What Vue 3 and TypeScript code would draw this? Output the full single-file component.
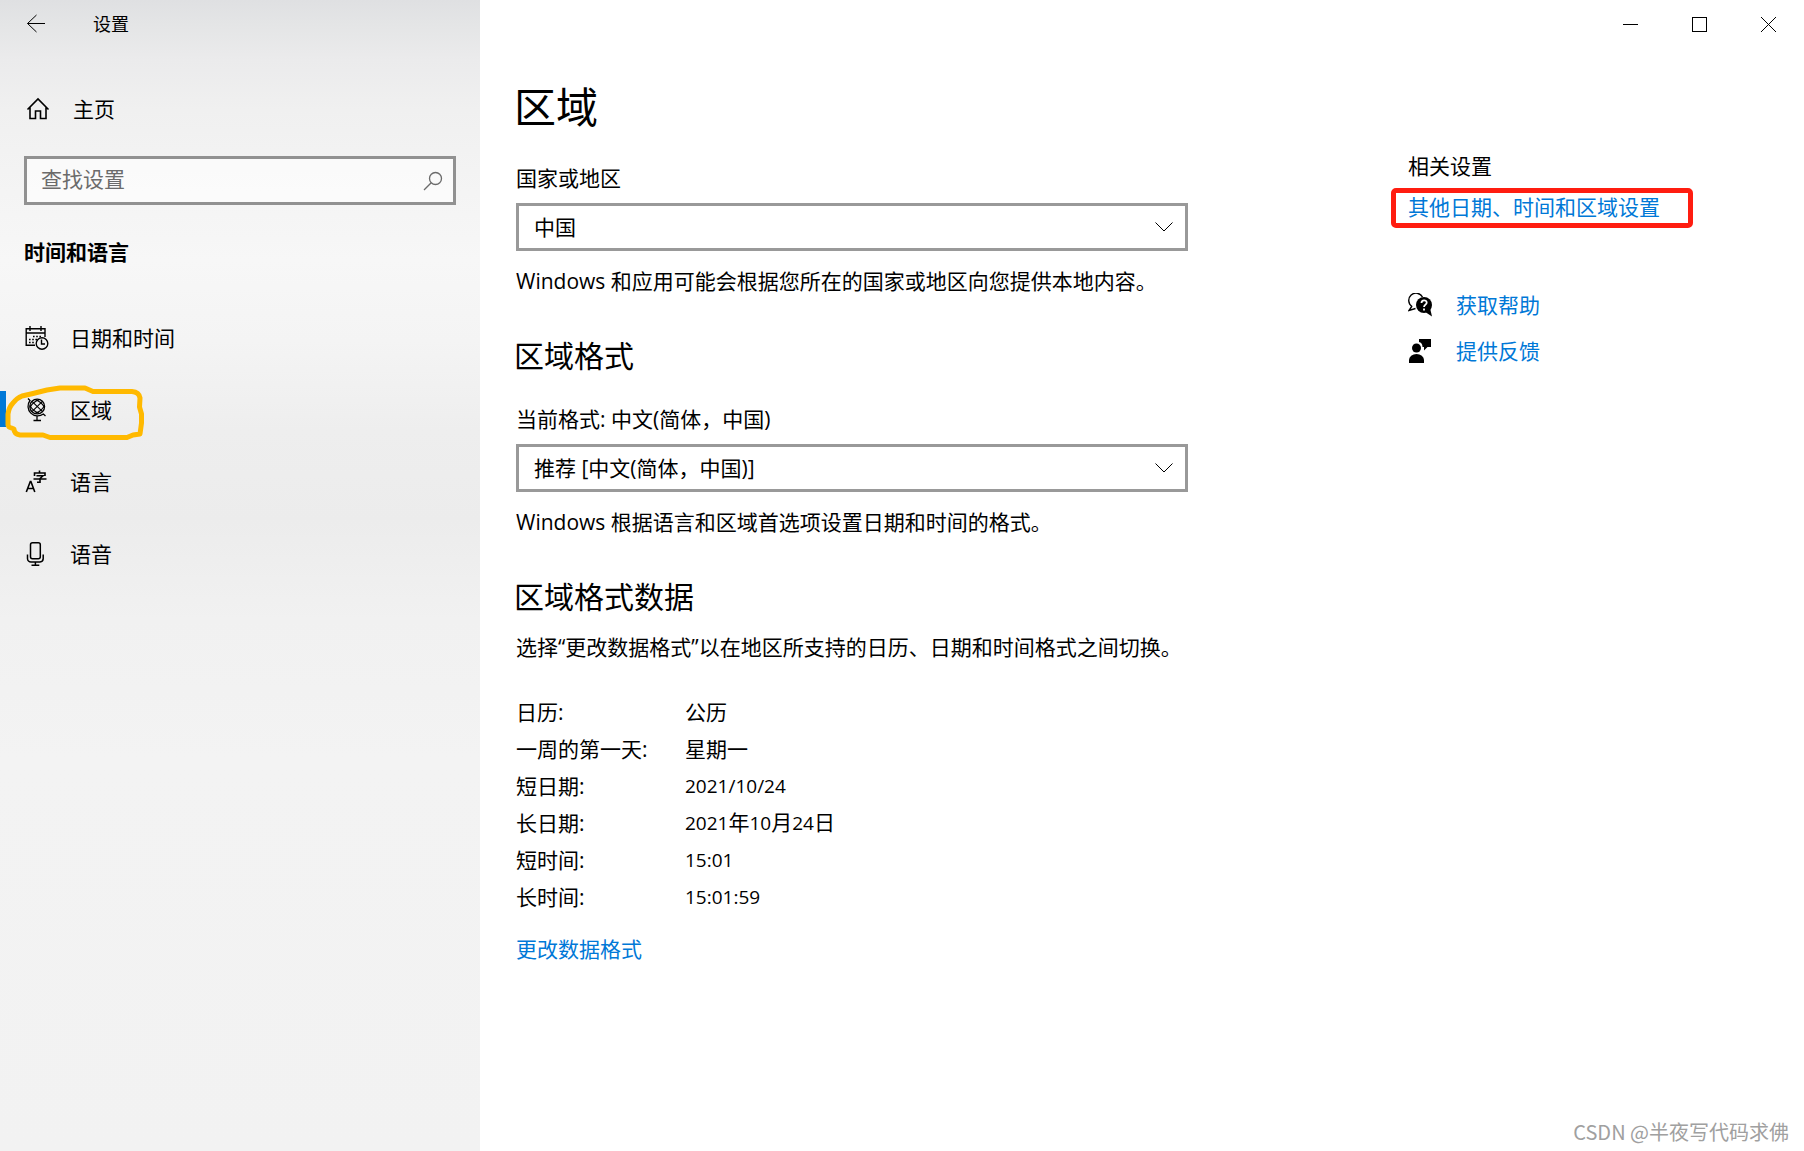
<script setup lang="ts">
import { ref } from 'vue'

type IconName = 'calendar' | 'globe' | 'language' | 'mic'

interface NavItem {
  id: string
  label: string
  icon: IconName
}

interface FormatRow {
  label: string
  value: string
}

const navItems: NavItem[] = [
  { id: 'datetime', label: '日期和时间', icon: 'calendar' },
  { id: 'region', label: '区域', icon: 'globe' },
  { id: 'language', label: '语言', icon: 'language' },
  { id: 'speech', label: '语音', icon: 'mic' },
]

const formatRows: FormatRow[] = [
  { label: '日历:', value: '公历' },
  { label: '一周的第一天:', value: '星期一' },
  { label: '短日期:', value: '2021/10/24' },
  { label: '长日期:', value: '2021年10月24日' },
  { label: '短时间:', value: '15:01' },
  { label: '长时间:', value: '15:01:59' },
]

const active = ref<string>('region')
const query = ref<string>('')
const country = ref<string>('中国')
const format = ref<string>('推荐 [中文(简体，中国)]')

// Splits a value into runs of figures and runs of Chinese text.
function runs(value: string): string[] {
  return value.match(/[\d/:]+|[^\d/:]+/g) ?? []
}

function isNumeric(run: string): boolean {
  return /^\d/.test(run)
}
</script>

<template>
  <div class="window">
    <aside class="sidebar">
      <header class="side-title">
        <button class="back" type="button" aria-label="返回">
          <svg width="20" height="20" viewBox="0 0 20 20" fill="none" stroke="currentColor">
            <path d="M19 9.500H1.500M10.500 1L1.500 9.500L10.500 18" />
          </svg>
        </button>
        <span class="app-name">设置</span>
      </header>

      <a class="home" href="#home">
        <svg width="24" height="24" viewBox="0 0 24 24" fill="none" stroke="currentColor" stroke-width="1.6">
          <path d="M1.5 12.5L12 2L22.5 12.5M4 10.5V21.5H9.5V14H14.5V21.5H20V10.5" />
        </svg>
        <span>主页</span>
      </a>

      <div class="search">
        <input v-model="query" type="text" placeholder="查找设置" aria-label="查找设置" />
        <svg width="20" height="20" viewBox="0 0 20 20" fill="none" stroke="currentColor" stroke-width="1.3">
          <circle cx="12.5" cy="7.5" r="6" />
          <path d="M8.2 11.8L1 19" />
        </svg>
      </div>

      <h2 class="side-heading">时间和语言</h2>

      <nav class="nav">
        <a
          v-for="item in navItems"
          :key="item.id"
          class="nav-item"
          :class="{ active: active === item.id }"
          :href="'#' + item.id"
          @click="active = item.id"
        >
          <svg v-if="item.icon === 'calendar'" class="nav-icon" viewBox="0 0 24 24" fill="none" stroke="currentColor" stroke-width="1.4">
            <path d="M10 19.3H1.2V2.7H20V11M1.2 7H20M5 0V5M16 0V5" />
            <path d="M8 10.5H17M4 13.5H12M4 16.5H10" stroke-width="1.6" stroke-dasharray="1.6 1.6" />
            <circle cx="17" cy="17.5" r="5.8" />
            <path d="M16.5 13.5V18H20" />
          </svg>
          <svg v-else-if="item.icon === 'globe'" class="nav-icon" viewBox="0 0 24 24" fill="none" stroke="currentColor" stroke-width="1.3">
            <circle cx="12.2" cy="8.5" r="7.4" />
            <path d="M3 0.5L5 2.500A9.6 9.6 0 0 0 18.400 16L20.500 18M12 18.500V22M8.5 22.5H16" />
            <path d="M7 3.3L17.5 13.700M7 13.700L17.400 3.3" stroke-width="1.1" />
            <path d="M5 9.500Q7.500 4 14.500 1.500M10 15.500Q17 13 19.400 7.500M5 7.500Q7.500 13 14.500 15.500M10 1.500Q17 4 19.400 9.500" stroke-width="1.1" />
          </svg>
          <svg v-else-if="item.icon === 'language'" class="nav-icon" viewBox="0 0 24 24" fill="none" stroke="currentColor" stroke-width="1.6">
            <path d="M1.3 22L5.3 11.5H5.9L9.8 22M2.6 18.5H8.5" />
            <path d="M14.5 0.5V3M9.5 6V3H20V6M11.5 5.8H18L15 8.5V12.3H12M8.5 9H21.5" />
          </svg>
          <svg v-else class="nav-icon" viewBox="0 0 24 24" fill="none" stroke="currentColor" stroke-width="1.5">
            <rect x="5.5" y="0.8" width="9.8" height="16" rx="2" />
            <path d="M2.5 12.5V16.5A3.5 3.5 0 0 0 6 20H15A3.5 3.5 0 0 0 18.2 16.5V12.5M10.4 20V23.2M6.5 23.2H14.3" />
          </svg>
          <span>{{ item.label }}</span>
          <svg v-if="item.id === 'region'" class="marker" width="150" height="72" viewBox="0 0 150 72" fill="none" stroke="#ffb900" stroke-width="5" stroke-linejoin="round" stroke-linecap="round">
            <path d="M8 51V40Q9 33 13 29Q17 24 22 22L33 19.500L47 16L60 14H85L93 17.500H132Q139 18 140 24L139.500 33L141.500 40V49L140 60L133 61L127 63.500H50L43 61H20Q14 60 14 55L9 53Z" />
          </svg>
        </a>
      </nav>
    </aside>

    <div class="body">
      <header class="controls">
        <button type="button" aria-label="最小化">
          <svg width="15" height="15" viewBox="0 0 15 15" stroke="currentColor" fill="none"><path d="M0 7.500H15" /></svg>
        </button>
        <button type="button" aria-label="最大化">
          <svg width="15" height="15" viewBox="0 0 15 15" stroke="currentColor" fill="none"><rect x="0.500" y="0.500" width="14" height="14" /></svg>
        </button>
        <button type="button" aria-label="关闭">
          <svg width="15" height="15" viewBox="0 0 15 15" stroke="currentColor" fill="none"><path d="M0 0L15 15M15 0L0 15" /></svg>
        </button>
      </header>

      <div class="columns">
        <main class="content">
          <h1>区域</h1>

          <section>
            <label for="country">国家或地区</label>
            <div class="select">
              <select id="country" v-model="country">
                <option>中国</option>
              </select>
              <svg width="18" height="10" viewBox="0 0 18 10" fill="none" stroke="currentColor"><path d="M0.500 0.500L9 9L17.500 0.500" /></svg>
            </div>
            <p class="hint">Windows 和应用可能会根据您所在的国家或地区向您提供本地内容。</p>
          </section>

          <section>
            <h2>区域格式</h2>
            <label for="format">当前格式: 中文(简体，中国)</label>
            <div class="select">
              <select id="format" v-model="format">
                <option>推荐 [中文(简体，中国)]</option>
              </select>
              <svg width="18" height="10" viewBox="0 0 18 10" fill="none" stroke="currentColor"><path d="M0.500 0.500L9 9L17.500 0.500" /></svg>
            </div>
            <p class="hint">Windows 根据语言和区域首选项设置日期和时间的格式。</p>
          </section>

          <section>
            <h2>区域格式数据</h2>
            <p class="hint">选择“更改数据格式”以在地区所支持的日历、日期和时间格式之间切换。</p>
            <table>
              <tbody>
                <tr v-for="row in formatRows" :key="row.label">
                  <th scope="row">{{ row.label }}</th>
                  <td><span v-for="(run, i) in runs(row.value)" :key="i" :class="{ figures: isNumeric(run) }">{{ run }}</span></td>
                </tr>
              </tbody>
            </table>
            <a class="link" href="#change">更改数据格式</a>
          </section>
        </main>

        <aside class="related">
          <h3>相关设置</h3>
          <div class="highlight">
            <a class="link" href="#more">其他日期、时间和区域设置</a>
          </div>
          <div class="support">
            <a class="link" href="#help">
              <svg width="24" height="24" viewBox="0 0 24 24">
                <path d="M4 13.500A7.300 7.300 0 1 1 14.500 4M4 13L1 17.500L7.500 15.500" fill="none" stroke="#000" stroke-width="1.400" />
                <circle cx="16" cy="12" r="8" fill="#000" />
                <path d="M18 19.500L24 23.500L22 15Z" fill="#000" />
                <path d="M13.500 10C13.500 6.500 18.700 6.500 18.700 9.700C18.700 11.500 16 11.800 16 14M16 15.500V17.500" fill="none" stroke="#fff" stroke-width="1.800" />
              </svg>
              <span>获取帮助</span>
            </a>
            <a class="link" href="#feedback">
              <svg width="24" height="24" viewBox="0 0 24 24">
                <circle cx="8.500" cy="9" r="4.500" />
                <path d="M1 24V21A7.500 6 0 0 1 16 21V24Z" />
                <path d="M11 0H23V8H19.500L16 11.500V8H14.500C14.500 5 13 3.500 11 3Z" />
              </svg>
              <span>提供反馈</span>
            </a>
          </div>
        </aside>
      </div>
    </div>

    <div class="watermark">CSDN @半夜写代码求佛</div>
  </div>
</template>

<style>
body {
  margin: 0;
  background: #fff;
}
</style>

<style scoped>
* {
  box-sizing: border-box;
}

.window {
  position: relative;
  display: flex;
  min-height: 100vh;
  background: #fff;
  color: #000;
  font-family: 'Open Sans', 'Noto Sans CJK SC', sans-serif;
  font-size: 21px;
  line-height: 28px;
}

h1,
h2,
h3,
p {
  margin: 0;
  font-weight: 400;
}

a {
  color: inherit;
  text-decoration: none;
}

button {
  display: flex;
  align-items: center;
  justify-content: center;
  padding: 0;
  border: 0;
  background: none;
  color: #000;
}

svg {
  flex: none;
}

/* Sidebar */
.sidebar {
  flex: 0 0 480px;
  background: linear-gradient(
    #dfe0e2 0,
    #e4e5e6 24px,
    #ebebec 60px,
    #f0f0f0 110px,
    #f3f3f3 170px,
    #f7f7f7 260px,
    #f4f4f4 340px,
    #eeeeee 430px,
    #ececec 520px,
    #f1f1f1 620px,
    #f3f3f3 760px,
    #f2f2f2 100%
  );
}

.side-title {
  display: flex;
  align-items: center;
  height: 48px;
}

.back {
  width: 72px;
  height: 48px;
}

.app-name {
  margin-left: 21px;
  font-size: 18px;
}

.home {
  display: flex;
  align-items: center;
  gap: 23px;
  height: 48px;
  margin-top: 37px;
  padding-left: 26px;
}

.search {
  display: flex;
  align-items: center;
  height: 49px;
  margin: 23px 24px 0;
  padding: 0 10px 0 14px;
  border: 3px solid #919191;
  background: rgba(255, 255, 255, 0.6);
  color: #6b6b6b;
}

.search input {
  flex: 1;
  min-width: 0;
  padding: 0 0 3px;
  border: 0;
  outline: 0;
  background: none;
  color: #000;
  font: inherit;
}

.search input::placeholder {
  color: #6b6b6b;
  opacity: 1;
}

.nav {
  margin-top: 36px;
}

.nav-item {
  position: relative;
  display: flex;
  align-items: center;
  gap: 21px;
  height: 72px;
  padding-left: 25px;
}

.nav-item.active::before {
  content: '';
  position: absolute;
  top: 17px;
  left: 0;
  width: 6px;
  height: 36px;
  background: #0078d7;
}

.nav-icon {
  width: 24px;
  height: 24px;
}

.marker {
  position: absolute;
  top: 0;
  left: 0;
  pointer-events: none;
}

/* Window body */
.body {
  flex: 1;
  min-width: 0;
}

.controls {
  display: flex;
  justify-content: flex-end;
  height: 48px;
  padding-right: 1px;
}

.controls button {
  width: 69px;
}

.columns {
  display: grid;
  grid-template-columns: minmax(0, 672px) minmax(302px, 1fr);
  column-gap: 203px;
  padding: 30px 36px 60px;
}

h1 {
  margin: 1px 0 0 -2px;
  font-size: 42px;
  line-height: 56px;
}

h2 {
  margin-left: -2px;
  font-size: 30px;
  line-height: 40px;
}

.side-heading {
  margin: 33px 24px 0;
  font-size: 21px;
  font-weight: 700;
  line-height: 28px;
}

section + section {
  margin-top: 41px;
}

label {
  display: block;
  margin: 29px 0 11px;
}

.select {
  position: relative;
}

.select select {
  display: block;
  width: 100%;
  height: 48px;
  padding: 0 48px 0 15px;
  border: 3px solid #999;
  border-radius: 0;
  appearance: none;
  background: #fff;
  color: #000;
  font: inherit;
}

.select svg {
  position: absolute;
  top: 19px;
  right: 15px;
  pointer-events: none;
}

.hint {
  margin-top: 16px;
}

table {
  margin-top: 32px;
  border-collapse: collapse;
}

th,
td {
  height: 37px;
  padding: 0;
  font-weight: 400;
  text-align: left;
}

th {
  width: 169px;
}

.figures {
  font-size: 19px;
}

.link {
  color: #0078d7;
}

section > .link {
  display: inline-block;
  margin-top: 20px;
}

/* Related settings */
.related {
  padding-top: 74px;
}

h3 {
  padding-left: 17px;
  font-size: 21px;
}

.highlight {
  max-width: 302px;
  height: 40px;
  margin-top: 8px;
  padding-left: 12px;
  border: 5px solid #ff1d10;
  border-radius: 5px;
  white-space: nowrap;
}

.support {
  margin-top: 54px;
  padding-left: 17px;
}

.support .link {
  display: flex;
  align-items: center;
  gap: 24px;
  height: 46px;
}

.watermark {
  position: absolute;
  right: 15px;
  bottom: 5px;
  color: #a0a0a0;
  font-family: 'Noto Sans CJK SC', sans-serif;
  font-size: 20px;
}
</style>
